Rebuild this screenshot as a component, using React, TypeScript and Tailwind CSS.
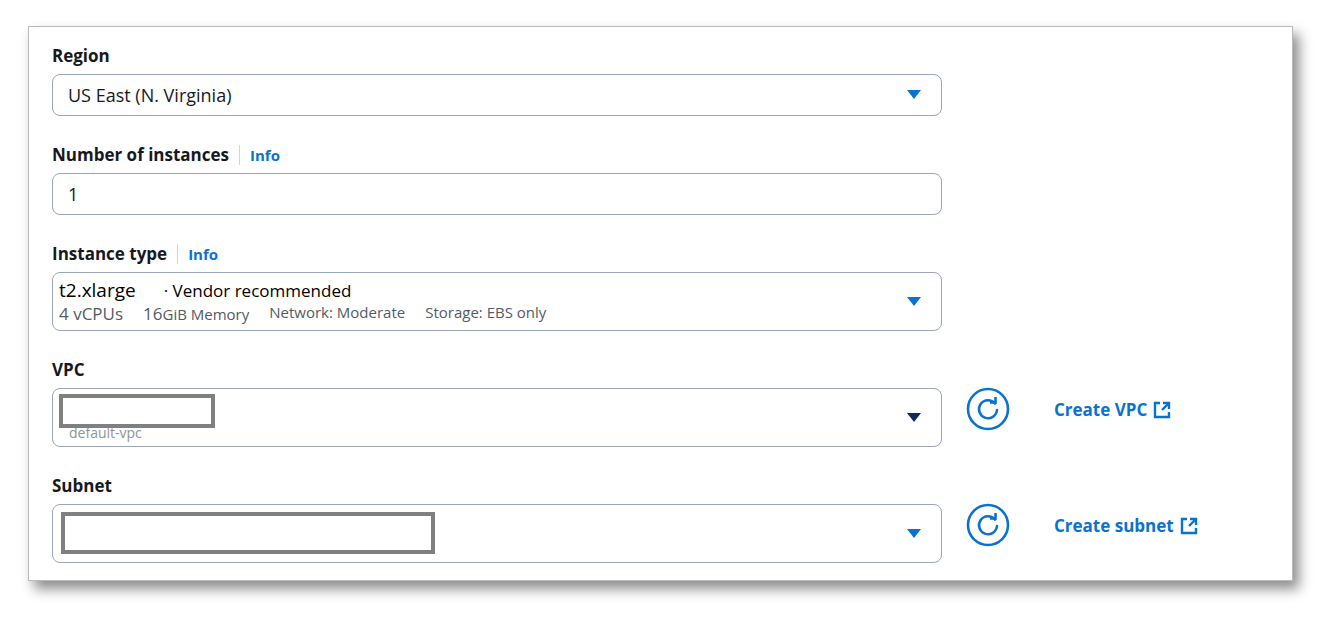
import React from "react";

const Caret = ({ dark }: { dark?: boolean }) => (
  <svg width="14" height="10" viewBox="0 0 14 10"><polygon points="0,0 14,0 7,9" fill={dark ? "#0f2a5c" : "#0972d3"} /></svg>
);

const Refresh = () => (
  <svg width="44" height="44" viewBox="0 0 44 44" fill="none" stroke="#0972d3" strokeWidth="2.6">
    <circle cx="22" cy="22" r="20" />
    <path d="M29 16.5 A9 9 0 1 0 31 23" strokeLinecap="round" />
    <polyline points="24,15.5 29.5,15.5 29.5,10" fill="none" strokeLinejoin="miter" />
  </svg>
);

const Ext = () => (
  <svg width="18" height="18" viewBox="0 0 18 18" fill="none" stroke="#0972d3" strokeWidth="2.4">
    <polyline points="7,2 2,2 2,16 16,16 16,11" />
    <polyline points="10,2 16,2 16,8" />
    <line x1="16" y1="2" x2="9" y2="9" />
  </svg>
);

const Label = ({ text, info }: { text: string; info?: boolean }) => (
  <div className="flex items-center h-[22px] text-[17px] font-bold text-[#16191f]">
    {text}
    {info && (
      <>
        <span className="mx-[10px] w-px h-[20px] bg-[#d1d5db]" />
        <span className="text-[15px] text-[#0972d3]">Info</span>
      </>
    )}
  </div>
);

const Box = ({ h, children }: { h: string; children?: React.ReactNode }) => (
  <div className={`w-[890px] shrink-0 ${h} border border-[#9ba7b6] rounded-[8px] flex items-center relative`}>{children}</div>
);

export default function App() {
  return (
    <div className="w-[1343px] h-[633px] bg-white relative" style={{ fontFamily: '"Open Sans", sans-serif' }}>
      <div className="absolute left-[28px] top-[26px] w-[1265px] h-[555px] bg-white border border-[#bbb] shadow-[6px_8px_12px_rgba(0,0,0,0.45)] pl-[23px] pt-[18px] flex flex-col gap-[28px]">
        <div className="flex flex-col gap-[7px]">
          <Label text="Region" />
          <Box h="h-[42px]">
            <span className="pl-[15px] text-[18px] text-[#16191f] flex-1">US East (N. Virginia)</span>
            <span className="pr-[20px]"><Caret /></span>
          </Box>
        </div>
        <div className="flex flex-col gap-[7px]">
          <Label text="Number of instances" info />
          <Box h="h-[42px]">
            <span className="pl-[15px] text-[18px] text-[#16191f]">1</span>
          </Box>
        </div>
        <div className="flex flex-col gap-[7px]">
          <Label text="Instance type" info />
          <Box h="h-[59px]">
            <div className="pl-[6px] flex-1 flex flex-col leading-tight">
              <div className="flex items-baseline text-[#000]">
                <span className="text-[19px]">t2.xlarge</span>
                <span className="ml-[28px] text-[17px]">· Vendor recommended</span>
              </div>
              <div className="text-[15px] text-[#545b64] flex gap-[20px]">
                <span className="text-[17px]">4 vCPUs</span>
                <span><span className="text-[17px]">16</span>GiB Memory</span>
                <span>Network: Moderate</span>
                <span>Storage: EBS only</span>
              </div>
            </div>
            <span className="pr-[20px]"><Caret /></span>
          </Box>
        </div>
        <div className="flex flex-col gap-[7px]">
          <Label text="VPC" />
          <div className="flex items-start">
            <Box h="h-[59px]">
              <div className="flex-1 pl-[16px] pt-[30px] text-[14px] text-[#8d949c]">default-vpc</div>
              <div className="absolute left-[6px] top-[5px] w-[156px] h-[34px] border-[4px] border-[#808080] bg-white" />
              <span className="pr-[20px]"><Caret dark /></span>
            </Box>
            <div className="ml-[24px] -mt-[1px]"><Refresh /></div>
            <div className="ml-[44px] mt-[9px] flex items-center gap-[6px] text-[17px] font-bold text-[#0972d3]">Create VPC <Ext /></div>
          </div>
        </div>
        <div className="flex flex-col gap-[7px]">
          <Label text="Subnet" />
          <div className="flex items-start">
            <Box h="h-[59px]">
              <div className="flex-1" />
              <div className="absolute left-[8px] top-[7px] w-[374px] h-[42px] border-[4px] border-[#808080] bg-white" />
              <span className="pr-[20px]"><Caret /></span>
            </Box>
            <div className="ml-[24px] -mt-[1px]"><Refresh /></div>
            <div className="ml-[44px] mt-[9px] flex items-center gap-[6px] text-[17px] font-bold text-[#0972d3]">Create subnet <Ext /></div>
          </div>
        </div>
      </div>
    </div>
  );
}
